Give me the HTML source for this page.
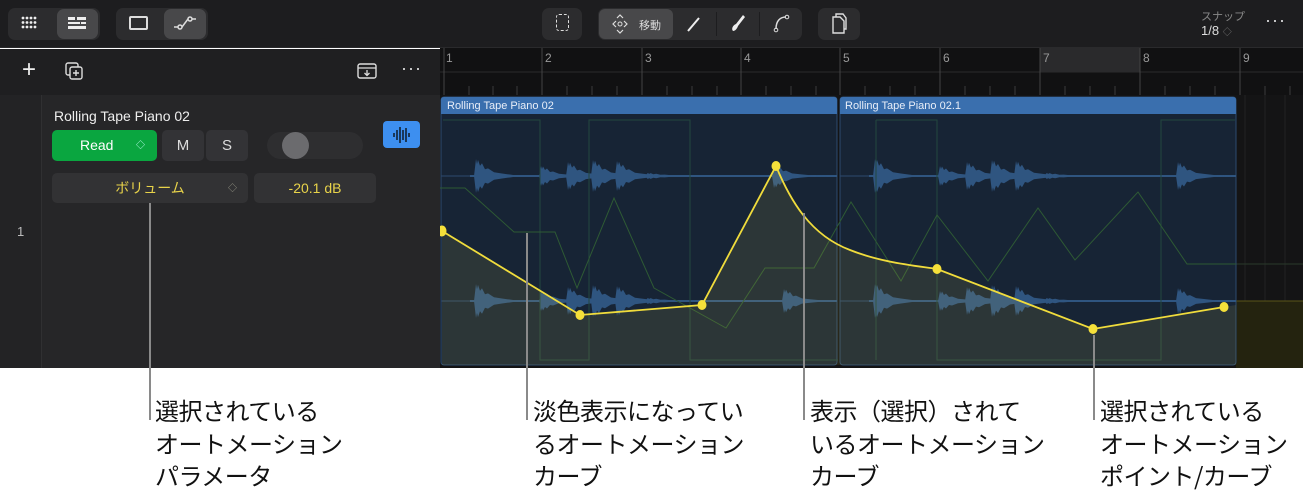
<!DOCTYPE html>
<html><head><meta charset="utf-8"><style>
*{margin:0;padding:0;box-sizing:border-box}
body{width:1303px;height:500px;background:#fff;font-family:"Liberation Sans","Noto Sans CJK JP",sans-serif;position:relative;overflow:hidden}
.a{position:absolute}
.top{left:0;top:0;width:1303px;height:48px;background:#1d1d1f;border-bottom:1px solid #2a2a2c}
.btn{position:absolute;background:#2c2c2e;border-radius:7px}
.sel{background:#48484a}
.cap{position:absolute;font-size:24px;line-height:32.5px;color:#111;font-family:"Noto Sans CJK JP",sans-serif;letter-spacing:-0.5px}
.ld{position:absolute;width:2px;background:#8a8a8a}
</style></head><body>
<div class="a top">
 <div class="btn" style="left:8px;top:8px;width:92px;height:32px"></div>
 <div class="btn sel" style="left:57px;top:9px;width:41px;height:30px"></div>
 <svg class="a" style="left:21px;top:16px" width="18" height="14"><g fill="#eee"><circle cx="2" cy="2" r="1.4"/><circle cx="6" cy="2" r="1.4"/><circle cx="10" cy="2" r="1.4"/><circle cx="14" cy="2" r="1.4"/><circle cx="2" cy="6.5" r="1.4"/><circle cx="6" cy="6.5" r="1.4"/><circle cx="10" cy="6.5" r="1.4"/><circle cx="14" cy="6.5" r="1.4"/><circle cx="2" cy="11" r="1.4"/><circle cx="6" cy="11" r="1.4"/><circle cx="10" cy="11" r="1.4"/><circle cx="14" cy="11" r="1.4"/></g></svg>
 <svg class="a" style="left:68px;top:16px" width="20" height="14"><g fill="#eee"><rect x="0" y="1" width="7" height="3"/><rect x="9" y="1" width="9" height="3"/><rect x="0" y="6" width="12" height="2"/><rect x="13" y="6" width="5" height="2"/><rect x="0" y="10" width="18" height="3"/></g></svg>
 <div class="btn" style="left:116px;top:8px;width:92px;height:32px"></div>
 <div class="btn sel" style="left:164px;top:9px;width:42px;height:30px"></div>
 <div class="a" style="left:129px;top:16px;width:19px;height:14px;border:2px solid #ddd;border-radius:2px"></div>
 <svg class="a" style="left:173px;top:14px" width="24" height="18"><path d="M1 13H5M9 13L15 5M19 5H23" stroke="#ddd" stroke-width="1.5" fill="none"/><circle cx="7" cy="13" r="2" stroke="#ddd" fill="none" stroke-width="1.5"/><circle cx="17" cy="5" r="2" stroke="#ddd" fill="none" stroke-width="1.5"/></svg>
 <div class="btn" style="left:542px;top:8px;width:40px;height:32px"></div>
 <div class="a" style="left:556px;top:14px;width:13px;height:17px;border:1.5px dashed #ddd;border-radius:3px"></div>
 <div class="btn" style="left:598px;top:8px;width:204px;height:32px"></div>
 <div class="btn sel" style="left:599px;top:9px;width:74px;height:30px;border-radius:6px"></div>
 <div class="a" style="left:716px;top:12px;width:1px;height:24px;background:#1d1d1f"></div>
 <div class="a" style="left:759px;top:12px;width:1px;height:24px;background:#1d1d1f"></div>
 <svg class="a" style="left:612px;top:14px" width="16" height="20"><path d="M5 4L8 1L11 4M5 16L8 19L11 16M4 7L1 10L4 13M12 7L15 10L12 13" stroke="#ddd" fill="none" stroke-width="1.2"/><circle cx="8" cy="10" r="2" stroke="#ddd" fill="none"/></svg>
 <div class="a" style="left:639px;top:17px;font-size:11px;color:#ddd">移動</div>
 <svg class="a" style="left:686px;top:15px" width="16" height="18"><path d="M2 16L13 3" stroke="#eee" stroke-width="2"/></svg>
 <svg class="a" style="left:729px;top:13px" width="18" height="20"><path d="M4 18C2 16 4 12 7 11L14 2L16 4L9 13C8 16 6 18 4 18Z" fill="#eee"/></svg>
 <svg class="a" style="left:772px;top:13px" width="18" height="20"><path d="M4 16C4 8 8 4 14 4" stroke="#ddd" fill="none" stroke-width="1.5"/><circle cx="4" cy="17" r="1.8" stroke="#ddd" fill="none"/><circle cx="15" cy="4" r="1.8" stroke="#ddd" fill="none"/></svg>
 <div class="btn" style="left:818px;top:8px;width:42px;height:32px"></div>
 <svg class="a" style="left:830px;top:12px" width="18" height="24"><path d="M3 5H10L14 9V21H3Z M6 5V2H13L16 6V17H14" stroke="#ddd" fill="none" stroke-width="1.4"/></svg>
 <div class="a" style="left:1201px;top:8px;font-size:11px;color:#888">スナップ</div>
 <div class="a" style="left:1201px;top:23px;font-size:13px;color:#ddd">1/8 <span style="color:#777;font-size:9px">◇</span></div>
 <div class="a" style="left:1265px;top:10px;font-size:18px;color:#ddd;letter-spacing:1px">···</div>
</div>
<div class="a" style="left:0;top:49px;width:440px;height:46px;background:#1f1f21"></div>
<div class="a" style="left:22px;top:56px;font-size:24px;color:#eee;font-weight:300">+</div>
<svg class="a" style="left:64px;top:61px" width="20" height="20"><rect x="2" y="2" width="12" height="12" rx="2" stroke="#ddd" fill="none" stroke-width="1.4"/><rect x="6" y="6" width="12" height="12" rx="2" stroke="#ddd" fill="#1f1f21" stroke-width="1.4"/><path d="M12 9V15M9 12H15" stroke="#ddd" stroke-width="1.4"/></svg>
<svg class="a" style="left:357px;top:62px" width="22" height="18"><rect x="1" y="2" width="18" height="14" rx="2" stroke="#ddd" fill="none" stroke-width="1.4"/><path d="M1 6H19M10 8V13M7.5 11L10 13.5L12.5 11" stroke="#ddd" fill="none" stroke-width="1.3"/></svg>
<div class="a" style="left:401px;top:58px;font-size:18px;color:#ddd;letter-spacing:1px">···</div>
<div class="a" style="left:0;top:95px;width:440px;height:273px;background:#262628"></div>
<div class="a" style="left:0;top:95px;width:42px;height:273px;background:#232325;border-right:1px solid #303032"></div>
<div class="a" style="left:17px;top:224px;font-size:13px;color:#bbb">1</div>
<div class="a" style="left:54px;top:108px;font-size:14px;color:#eee">Rolling Tape Piano 02</div>
<div class="a" style="left:52px;top:130px;width:105px;height:31px;background:#0aa640;border-radius:5px;color:#fff;font-size:14px;line-height:31px;padding-left:28px">Read<span style="position:absolute;left:84px;font-size:9px;color:#bfe">◇</span></div>
<div class="a" style="left:162px;top:130px;width:42px;height:31px;background:#333336;border-radius:5px;color:#ddd;font-size:15px;line-height:31px;text-align:center">M</div>
<div class="a" style="left:206px;top:130px;width:42px;height:31px;background:#333336;border-radius:5px;color:#ddd;font-size:15px;line-height:31px;text-align:center">S</div>
<div class="a" style="left:267px;top:132px;width:96px;height:27px;background:#2e2e30;border-radius:14px"></div>
<div class="a" style="left:282px;top:132px;width:27px;height:27px;background:#6b6b6e;border-radius:50%"></div>
<div class="a" style="left:383px;top:121px;width:37px;height:27px;background:#3d8ff0;border-radius:4px"></div>
<svg class="a" style="left:392px;top:125px" width="20" height="20"><g stroke="#123" stroke-width="1.6"><path d="M2 8V12M5 5V15M8 2V18M11 5V15M14 3V17M17 8V12"/></g></svg>
<div class="a" style="left:52px;top:173px;width:196px;height:30px;background:#323234;border-radius:5px;color:#e8d34a;font-size:14px;line-height:30px;text-align:center;font-family:'Noto Sans CJK JP',sans-serif">ボリューム<span style="position:absolute;left:176px;font-size:9px;color:#998">◇</span></div>
<div class="a" style="left:254px;top:173px;width:122px;height:30px;background:#323234;border-radius:5px;color:#e8d34a;font-size:14px;line-height:30px;text-align:center">-20.1 dB</div>
<svg class="a" style="left:440px;top:48px" width="863" height="320" viewBox="440 48 863 320">
 <defs>
  <path id="n" d="M0 0L2 -1L3 -0.7L4 -0.95L6 -0.6L8 -0.75L11 -0.4L14 -0.45L20 -0.22L28 -0.15L40 -0.05L55 0L40 0.05L28 0.15L20 0.22L14 0.45L11 0.4L8 0.75L6 0.6L4 0.95L3 0.7L2 1Z"/>
  <g id="wf" fill="#2f5580">
   <use href="#n" transform="translate(474 0) scale(1 17)"/>
   <use href="#n" transform="translate(539 0) scale(1 10)"/>
   <use href="#n" transform="translate(566 0) scale(1 14)"/>
   <use href="#n" transform="translate(591 0) scale(1 16)"/>
   <use href="#n" transform="translate(615 0) scale(1 15)"/>
   <use href="#n" transform="translate(645 0) scale(1.4 3)"/>
   <rect x="470" y="-1" width="367" height="2"/>
  </g>
 </defs>
 <rect x="440" y="48" width="863" height="320" fill="#141415"/>
 <rect x="440" y="48" width="863" height="47" fill="#111112"/>
 <rect x="1040" y="48" width="100" height="24" fill="#2a2a2c"/>
 <line x1="440" y1="72" x2="1303" y2="72" stroke="#2a2a2c"/>
 <g stroke="#444" stroke-width="1"><path d="M444 48V95M542 48V95M642 48V95M741 48V95M840 48V95M940 48V95M1040 48V95M1140 48V95M1240 48V95"/></g>
 <g stroke="#3a3a3c"><path d="M469 86V95M493 86V95M517 86V95M567 86V95M592 86V95M617 86V95M667 86V95M692 86V95M717 86V95M766 86V95M791 86V95M816 86V95M865 86V95M890 86V95M915 86V95M965 86V95M990 86V95M1015 86V95M1065 86V95M1090 86V95M1115 86V95M1165 86V95M1190 86V95M1215 86V95M1265 86V95M1290 86V95"/></g>
 <g fill="#999" font-size="12" font-family="Liberation Sans"><text x="446" y="62">1</text><text x="545" y="62">2</text><text x="645" y="62">3</text><text x="744" y="62">4</text><text x="843" y="62">5</text><text x="943" y="62">6</text><text x="1043" y="62">7</text><text x="1143" y="62">8</text><text x="1243" y="62">9</text></g>
 <g stroke="#222224"><path d="M1245 95V368M1265 95V368M1285 95V368"/></g>
 <path d="M1236 301H1303V368H1236Z" fill="#24230f"/>
 <line x1="1236" y1="301" x2="1303" y2="301" stroke="#5a5418"/>
 <line x1="1236" y1="264" x2="1303" y2="264" stroke="#2a3a2a"/>
 <rect x="441" y="97" width="396" height="268" rx="3" fill="#172435" stroke="#2c4a6e"/>
 <rect x="840" y="97" width="396" height="268" rx="3" fill="#172435" stroke="#2c4a6e"/>
 <path d="M441 114V100Q441 97 444 97H834Q837 97 837 100V114Z" fill="#3a6fae"/>
 <path d="M840 114V100Q840 97 843 97H1233Q1236 97 1236 100V114Z" fill="#3a6fae"/>
 <g fill="#e8eef8" font-size="11" font-family="Liberation Sans"><text x="447" y="109">Rolling Tape Piano 02</text><text x="845" y="109">Rolling Tape Piano 02.1</text></g>
 <g stroke="#2c4a6e"><path d="M441 176H837M840 176H1236M441 301H837M840 301H1236"/></g>
 <use href="#wf" transform="translate(0 176)"/>
 <use href="#wf" transform="translate(399 176)"/>
 <use href="#wf" transform="translate(0 301)"/>
 <use href="#wf" transform="translate(399 301)"/>
 <g fill="#2f5580">
  <use href="#n" transform="translate(772 176) scale(1 12)"/>
  <use href="#n" transform="translate(1176 176) scale(1 14)"/>
  <use href="#n" transform="translate(782 301) scale(1 12)"/>
  <use href="#n" transform="translate(1176 301) scale(1 13)"/>
 </g>
 <g stroke="#23473f" fill="none" stroke-width="1">
  <path d="M443 120H540V360H589V120H690V360H838"/>
  <path d="M876 120V360M876 120H937V360H1161V120H1235"/>
 </g>
 <path d="M440 188H465L514 232H555L577 288L614 198L654 288L726 328L765 268H814L851 202L901 281L937 215L988 281L1038 208L1075 260L1138 192L1187 264H1236" stroke="#2e5a34" fill="none" stroke-width="1"/>
 <path d="M442 231L580 315L702 305L776 166C790 200 810 235 850 250C880 262 910 265 937 269L1093 329L1224 307L1236 305V365H442Z" fill="#e8d34a" fill-opacity="0.1"/>
 <path d="M442 231L580 315L702 305L776 166C790 200 810 235 850 250C880 262 910 265 937 269L1093 329L1224 307" stroke="#f0dc3c" stroke-width="1.8" fill="none"/>
 <g fill="#f5e03a"><ellipse cx="442" cy="231" rx="4.5" ry="5.5"/><ellipse cx="580" cy="315" rx="4.5" ry="5"/><ellipse cx="702" cy="305" rx="4.5" ry="5"/><ellipse cx="776" cy="166" rx="4.5" ry="5"/><ellipse cx="937" cy="269" rx="4.5" ry="5"/><ellipse cx="1093" cy="329" rx="4.5" ry="5"/><ellipse cx="1224" cy="307" rx="4.5" ry="5"/></g>
</svg>
<div class="ld" style="left:149px;top:203px;height:217px"></div>
<div class="ld" style="left:526px;top:233px;height:187px"></div>
<div class="ld" style="left:803px;top:213px;height:207px"></div>
<div class="ld" style="left:1093px;top:335px;height:85px"></div>
<div class="cap" style="left:155px;top:394px">選択されている<br>オートメーション<br>パラメータ</div>
<div class="cap" style="left:533px;top:394px">淡色表示になってい<br>るオートメーション<br>カーブ</div>
<div class="cap" style="left:810px;top:394px">表示（選択）されて<br>いるオートメーション<br>カーブ</div>
<div class="cap" style="left:1100px;top:394px">選択されている<br>オートメーション<br>ポイント/カーブ</div>
</body></html>
